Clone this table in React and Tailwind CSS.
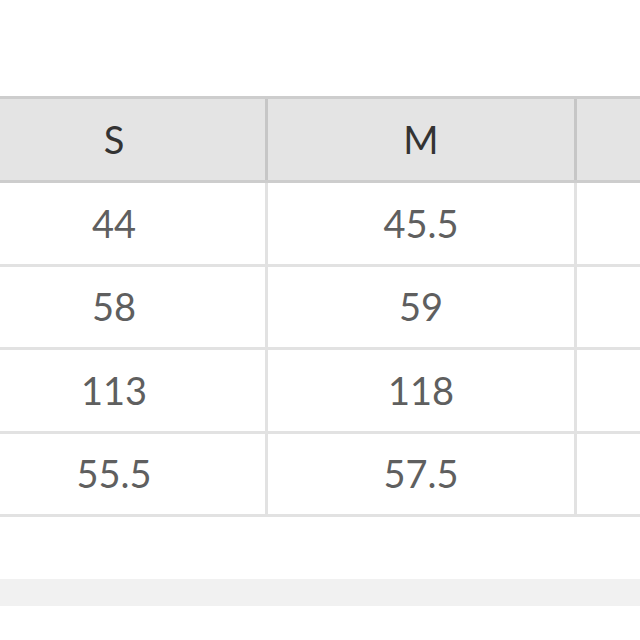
const header = ["S", "M", ""];
const rows = [
  ["44", "45.5", ""],
  ["58", "59", ""],
  ["113", "118", ""],
  ["55.5", "57.5", ""],
];

export default function App() {
  return (
    <div
      className="w-[640px] h-[640px] bg-white overflow-hidden pt-[96px]"
      style={{ fontFamily: "Lato, 'Open Sans', sans-serif" }}
    >
      {/* SIZE TABLE */}
      <div className="ml-[-37px] w-[1000px]">
        <div className="flex border-t-[3px] border-b-[3px] border-[#cdcdcd] bg-[#e4e4e4]">
          {header.map((h, j) => (
            <div
              key={j}
              className={`${j === 0 ? "w-[305px]" : "w-[309px]"} shrink-0 h-[81px] flex items-center justify-center border-r-[3px] border-[#c6c6c6] text-[38px] text-[#333333]`}
            >
              {h}
            </div>
          ))}
        </div>

        {rows.map((r, i) => (
          <div key={i} className="flex border-b-[3px] border-[#e2e2e2]">
            {r.map((v, j) => (
              <div
                key={j}
                className={`${j === 0 ? "w-[305px]" : "w-[309px]"} shrink-0 h-[80.5px] flex items-center justify-center border-r-[3px] border-[#e2e2e2] text-[38px] text-[#5f5f5f]`}
              >
                {v}
              </div>
            ))}
          </div>
        ))}
      </div>

      <div className="mt-[62px] h-[27px] bg-[#f1f1f1]" />
    </div>
  );
}
